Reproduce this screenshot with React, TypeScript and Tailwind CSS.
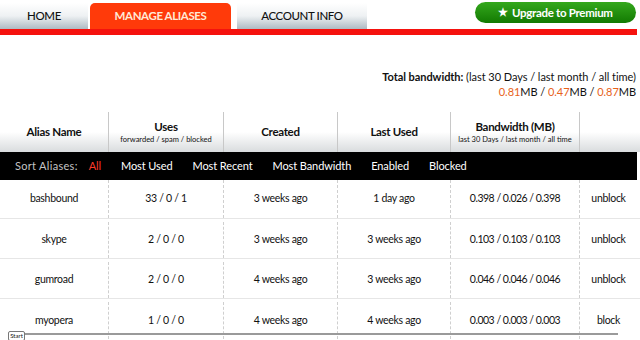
import React from "react";

const rows = [
  { name: "bashbound", uses: "33 / 0 / 1", created: "3 weeks ago", last: "1 day ago", bw: "0.398 / 0.026 / 0.398", action: "unblock" },
  { name: "skype", uses: "2 / 0 / 0", created: "3 weeks ago", last: "3 weeks ago", bw: "0.103 / 0.103 / 0.103", action: "unblock" },
  { name: "gumroad", uses: "2 / 0 / 0", created: "4 weeks ago", last: "3 weeks ago", bw: "0.046 / 0.046 / 0.046", action: "unblock" },
  { name: "myopera", uses: "1 / 0 / 0", created: "4 weeks ago", last: "4 weeks ago", bw: "0.003 / 0.003 / 0.003", action: "block" },
];

const cols = "grid grid-cols-[108px_115px_114px_113px_129px_58px]";

export default function App() {
  return (
    <div className="w-[640px] h-[340px] bg-white overflow-hidden relative text-[#111]" style={{ fontFamily: "Lato, 'Open Sans', sans-serif" }}>
      {/* top nav */}
      <div className="flex items-start pt-[3px] h-[29px]">
        <div className="w-[88px] h-[26px] flex items-center justify-center text-[11.5px] tracking-[-0.4px] font-medium bg-gradient-to-b from-white via-[#eef1f3] to-[#aebbc3]">HOME</div>
        <div className="ml-[2px] w-[141px] h-[26px] flex items-center justify-center text-[11.5px] tracking-[-0.4px] font-bold text-[#ffe9d6] bg-[#ff3a0a] rounded-t-[5px]">MANAGE ALIASES</div>
        <div className="ml-[6px] w-[130px] h-[26px] flex items-center justify-center text-[11.5px] tracking-[-0.4px] font-medium bg-gradient-to-b from-white via-[#eef1f3] to-[#aebbc3]">ACCOUNT INFO</div>
        <div className="ml-auto mr-[4px] w-[161px] h-[21px] -mt-[1px] rounded-full bg-gradient-to-b from-[#34a81c] to-[#117a02] flex items-center justify-center text-white text-[11.5px] tracking-[-0.3px] font-bold gap-[4px]">
          <span className="text-[11px]">★</span>
          <span>Upgrade to Premium</span>
        </div>
      </div>
      <div className="h-[6px] w-[637px] bg-[#f5120e]"></div>

      {/* total bandwidth */}
      <div className="mt-[34px] pr-[4px] flex flex-col items-end text-[11px] tracking-[-0.05px] leading-[15px]">
        <div><span className="font-bold">Total bandwidth:</span> (last 30 Days / last month / all time)</div>
        <div>
          <span className="text-[#e8621a]">0.81</span>MB / <span className="text-[#e8621a]">0.47</span>MB / <span className="text-[#e8621a]">0.87</span>MB
        </div>
      </div>

      {/* table header */}
      <div className={`mt-[13px] ${cols} h-[40px] bg-gradient-to-b from-white via-white to-[#d9dcde]`}>
        <div className="flex items-center justify-center text-[11.5px] tracking-[-0.3px] font-bold">Alias Name</div>
        <div className="flex flex-col items-center justify-center border-l border-[#c8c8c8] leading-none">
          <span className="text-[11.5px] tracking-[-0.3px] font-bold">Uses</span>
          <span className="text-[7.5px] mt-[4px]">forwarded / spam / blocked</span>
        </div>
        <div className="flex items-center justify-center border-l border-[#c8c8c8] text-[11.5px] tracking-[-0.3px] font-bold">Created</div>
        <div className="flex items-center justify-center border-l border-[#c8c8c8] text-[11.5px] tracking-[-0.3px] font-bold">Last Used</div>
        <div className="flex flex-col items-center justify-center border-l border-[#c8c8c8] leading-none">
          <span className="text-[11.5px] tracking-[-0.3px] font-bold">Bandwidth (MB)</span>
          <span className="text-[7.5px] mt-[4px]">last 30 Days / last month / all time</span>
        </div>
        <div className="border-l border-[#c8c8c8]"></div>
      </div>

      {/* sort bar */}
      <div className="w-[637px] h-[28px] bg-black flex items-center text-[11px] tracking-[-0.1px] text-white">
        <span className="ml-[15px] text-[#c4c4c4] tracking-[0.3px]">Sort Aliases:</span>
        <span className="ml-[11px] text-[#ff3a2a]">All</span>
        <span className="ml-[20px]">Most Used</span>
        <span className="ml-[20px]">Most Recent</span>
        <span className="ml-[20px]">Most Bandwidth</span>
        <span className="ml-[20px]">Enabled</span>
        <span className="ml-[20px]">Blocked</span>
      </div>

      {/* rows */}
      <div className="text-[10.5px] tracking-[-0.3px]">
        {rows.map((r, i) => (
          <div key={r.name} className={`${cols} ${i === 0 ? "h-[39px]" : "h-[40px] pt-[3px]"} ${i < rows.length - 1 ? "border-b border-[#e6e6e6]" : ""}`}>
            <div className="flex items-center justify-center">{r.name}</div>
            <div className="flex items-center justify-center border-l border-dashed border-[#cfcfcf]">{r.uses}</div>
            <div className="flex items-center justify-center border-l border-dashed border-[#cfcfcf]">{r.created}</div>
            <div className="flex items-center justify-center border-l border-dashed border-[#cfcfcf]">{r.last}</div>
            <div className="flex items-center justify-center border-l border-dashed border-[#cfcfcf] tracking-[-0.5px]">{r.bw}</div>
            <div className="flex items-center justify-center border-l border-dashed border-[#cfcfcf]">{r.action}</div>
          </div>
        ))}
      </div>

      {/* bottom scroll line */}
      <div className="absolute left-[25px] top-[333px] w-[593px] h-[2px] bg-[#9a9a9a]"></div>
      <div className="absolute left-[8px] top-[331px] w-[17px] h-[10px] border border-[#777] bg-white rounded-[2px] text-[6px] leading-[8px] text-center">Start</div>
    </div>
  );
}
